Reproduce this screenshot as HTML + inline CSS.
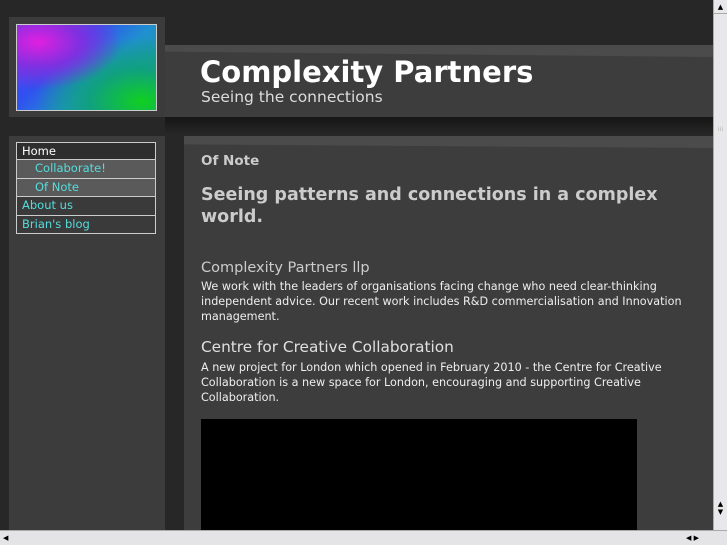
<!DOCTYPE html>
<html><head><style>
*{margin:0;padding:0;box-sizing:border-box}
body{width:727px;height:545px;overflow:hidden;background:#272727;font-family:"DejaVu Sans","Liberation Sans",sans-serif;position:relative}
.abs{position:absolute}
#logo{left:9px;top:17px;width:156px;height:100px;background:#3b3b3b}
#img{left:16px;top:24px;width:141px;height:87px;border:1px solid #ccc;background:radial-gradient(ellipse at 15% 20%,#e020e0 0%,#8030e0 25%,transparent 50%),radial-gradient(ellipse at 90% 90%,#10d020 0%,#10a080 30%,transparent 60%),linear-gradient(135deg,#6040f0 0%,#3050f0 35%,#2090d0 60%,#10a080 100%)}
#hdr{left:165px;top:45px;width:548px;height:72px;background:#3d3d3d}
#hdrs{left:165px;top:45px;width:548px;height:12px;background:#4b4b4b;clip-path:polygon(0 0,100% 0,100% 100%,0 55%)}
#shadow{left:165px;top:117px;width:548px;height:17px;background:linear-gradient(#151515,#262626)}
#side{left:9px;top:136px;width:156px;height:394px;background:#3c3c3c}
#main{left:184px;top:136px;width:529px;height:394px;background:#3d3d3d}
#mains{left:184px;top:136px;width:529px;height:12px;background:#4b4b4b;clip-path:polygon(0 0,100% 0,100% 100%,0 70%)}
h1{position:absolute;left:200px;top:55px;font-size:29px;font-weight:bold;color:#fff}
.sub{left:201px;top:88px;font-size:15.5px;color:#ddd}
#nav{left:16px;top:142px;width:140px}
#nav div{height:18.4px;border:1px solid #ccc;border-top:none;font-size:11.5px;line-height:17px;padding-left:5px;color:#5dd;background:#3a3a3a}
#nav div:first-child{border-top:1px solid #ccc;color:#fff;background:#2e2e2e}
#nav .s{padding-left:18px;background:#5a5a5a}
.t{color:#ddd}
#vid{left:201px;top:419px;width:436px;height:111px;background:#000}
#vs{left:713px;top:0;width:14px;height:530px;background:#e8e8ea;border-left:1px solid #aaa}
#hs{left:0;top:530px;width:727px;height:15px;background:#e4e4e6;border-top:1px solid #aaa}
</style></head><body>
<div class="abs" id="logo"></div><div class="abs" id="img"></div>
<div class="abs" id="hdr"></div><div class="abs" id="hdrs"></div><div class="abs" id="shadow"></div>
<h1>Complexity Partners</h1>
<div class="abs sub">Seeing the connections</div>
<div class="abs" id="side"></div>
<div class="abs" id="nav"><div>Home</div><div class="s">Collaborate!</div><div class="s">Of Note</div><div>About us</div><div>Brian's blog</div></div>
<div class="abs" id="main"></div><div class="abs" id="mains"></div>
<div class="abs t" style="left:201px;top:153px;font-size:13.5px;font-weight:bold;color:#ccc">Of Note</div>
<div class="abs t" style="left:201px;top:184px;width:490px;font-size:17.5px;font-weight:bold;line-height:22px;color:#ccc">Seeing patterns and connections in a complex world.</div>
<div class="abs t" style="left:201px;top:260px;font-size:14.5px;color:#ccc">Complexity Partners llp</div>
<div class="abs t" style="left:201px;top:279px;width:500px;font-size:11.2px;line-height:15px;color:#eee">We work with the leaders of organisations facing change who need clear-thinking independent advice. Our recent work includes R&amp;D commercialisation and Innovation management.</div>
<div class="abs t" style="left:201px;top:338px;font-size:15.3px;color:#e0e0e0">Centre for Creative Collaboration</div>
<div class="abs t" style="left:201px;top:360px;width:480px;font-size:11.2px;line-height:15px;color:#eee">A new project for London which opened in February 2010 - the Centre for Creative Collaboration is a new space for London, encouraging and supporting Creative Collaboration.</div>
<div class="abs" id="vid"></div>
<div class="abs" id="vs"><div style="height:14px;border-bottom:1px solid #aaa;font-size:7px;text-align:center;line-height:14px">▲</div><div style="margin-top:112px;font-size:6px;color:#aaa;text-align:center">⁞⁞⁞</div><div style="position:absolute;top:500px;width:13px;font-size:7px;text-align:center">▲<br>▼</div></div>
<div class="abs" id="hs"><div style="position:absolute;left:3px;font-size:7px;line-height:14px">◀</div><div style="position:absolute;left:686px;font-size:7px;line-height:14px">◀ ▶</div></div>
</body></html>
